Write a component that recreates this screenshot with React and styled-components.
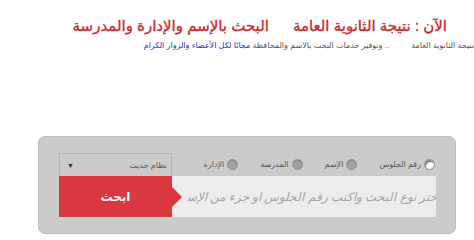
import React, { useState } from 'react';
import styled, { createGlobalStyle } from 'styled-components';

const GlobalStyle = createGlobalStyle`
  body {
    margin: 0;
    background: #ffffff;
    font-family: Tahoma, Arial, "DejaVu Sans", sans-serif;
  }
`;

const Page = styled.div`
  direction: rtl;
  width: 474px;
  height: 237px;
  overflow: hidden;
`;

const Header = styled.header`
  padding: 15px 27px 0 0;
`;

const Title = styled.h1`
  margin: 0;
  display: flex;
  gap: 24px;
  font-size: 15px;
  font-weight: normal;
  color: #c9252b;
  white-space: nowrap;
  line-height: 22px;
  -webkit-text-stroke: 0.3px #c9252b;
`;

const Ticker = styled.p`
  margin: 2px -27px 0 0;
  font-size: 8px;
  color: #555;
  white-space: nowrap;
  line-height: 14px;
`;

const Gap = styled.span`
  display: inline-block;
  width: 22px;
`;

const Free = styled.span`
  color: #2c2cc4;
`;

const Panel = styled.section`
  margin: 83px 18px 0 0;
  width: 418px;
  box-sizing: border-box;
  padding: 16px 19px 16px 20px;
  background: #cbcbcb;
  border: 1px solid #bdbdbd;
  border-radius: 7px;
`;

const TopRow = styled.div`
  display: flex;
  align-items: center;
  height: 23px;
`;

const Radios = styled.div`
  flex: 1;
  display: flex;
  align-items: center;
  gap: 22px;
  padding-right: 1px;
`;

const RadioLabel = styled.label`
  display: flex;
  align-items: center;
  gap: 3px;
  font-size: 8px;
  color: #555;
  white-space: nowrap;
  cursor: pointer;
`;

const Dot = styled.span`
  width: 11px;
  height: 11px;
  border-radius: 50%;
  box-sizing: border-box;
  background: ${({ checked }) => (checked ? '#ffffff' : '#a2a2a2')};
  border: 1px solid ${({ checked }) => (checked ? '#8a8a8a' : '#8f8f8f')};
  box-shadow: ${({ checked }) =>
    checked ? 'inset 1px 2px 1px #777' : 'inset 0 1px 1px rgba(0,0,0,0.2)'};
`;

const Select = styled.div`
  width: 113px;
  height: 23px;
  box-sizing: border-box;
  border: 1px solid #b3b3b3;
  border-bottom: none;
  display: flex;
  align-items: center;
  justify-content: space-between;
  padding: 0 4px 0 7px;
  font-size: 8px;
  color: #555;
`;

const Arrow = styled.span`
  font-size: 7px;
  color: #333;
`;

const SearchRow = styled.div`
  display: flex;
  height: 41px;
`;

const Input = styled.input`
  flex: 1;
  min-width: 0;
  border: none;
  outline: none;
  background: #ededed;
  direction: rtl;
  padding: 0 0 0 16px;
  margin: 0;
  text-indent: -4px;
  font-family: inherit;
  font-size: 12px;
  font-style: italic;
  color: #999;
  &::placeholder {
    color: #a5a5a5;
  }
`;

const Button = styled.button`
  position: relative;
  width: 113px;
  border: none;
  margin: 0;
  background: #da373e;
  color: #fff;
  font-family: inherit;
  font-size: 12px;
  font-weight: bold;
  cursor: pointer;
  &::before {
    content: '';
    position: absolute;
    right: -10px;
    top: 50%;
    margin-top: -10px;
    border-style: solid;
    border-width: 10px 0 10px 10px;
    border-color: transparent transparent transparent #da373e;
  }
`;

const options = ['رقم الجلوس', 'الإسم', 'المدرسة', 'الإدارة'];

export default function App() {
  const [selected, setSelected] = useState(0);
  return (
    <Page>
      <GlobalStyle />
      <Header>
        <Title>
          <span>الآن : نتيجة الثانوية العامة</span>
          <span>البحث بالإسم والإدارة والمدرسة</span>
        </Title>
        <Ticker>
          نتيجة الثانوية العامة<Gap />.. وتوفير خدمات البحث بالاسم والمحافظة{' '}
          <Free>مجانًا لكل الأعضاء والزوار الكرام</Free>
        </Ticker>
      </Header>
      <Panel>
        <TopRow>
          <Radios>
            {options.map((label, i) => (
              <RadioLabel key={label} onClick={() => setSelected(i)}>
                <Dot checked={selected === i} />
                {label}
              </RadioLabel>
            ))}
          </Radios>
          <Select>
            <span>نظام حديث</span>
            <Arrow>▼</Arrow>
          </Select>
        </TopRow>
        <SearchRow>
          <Input placeholder="اختر نوع البحث واكتب رقم الجلوس او جزء من الإسم" />
          <Button>ابحث</Button>
        </SearchRow>
      </Panel>
    </Page>
  );
}
